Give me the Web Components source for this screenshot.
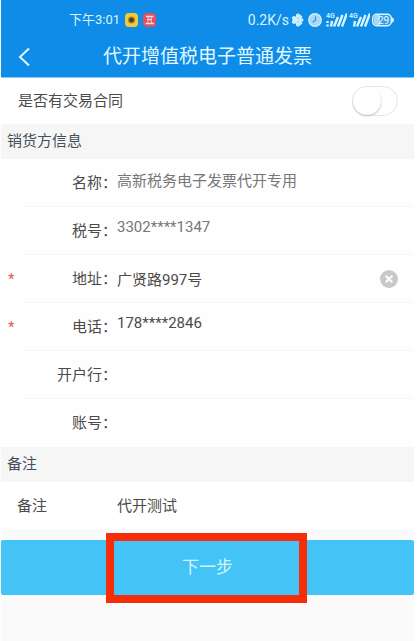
<!DOCTYPE html>
<html lang="zh-CN">
<head>
<meta charset="utf-8">
<meta name="viewport" content="width=device-width, initial-scale=1">
<title>代开增值税电子普通发票</title>
<style>
body { margin: 0; background: #fff; font-family: Roboto, "Noto Sans CJK SC", sans-serif; font-size: 15px; color: #4b4b4b; }
</style>
</head>
<body>
<invoice-app></invoice-app>
<script>
function define(name, html, setup) {
  customElements.define(name, class extends HTMLElement {
    connectedCallback() {
      if (this.shadowRoot) return;
      const root = this.attachShadow({ mode: 'open' });
      const t = document.createElement('template');
      t.innerHTML = html;
      root.append(t.content.cloneNode(true));
      if (setup) setup(this, root);
    }
  });
}

define('status-bar', `
<style>
:host { display: flex; align-items: center; justify-content: space-between; height: 40px; padding: 0 20px 0 68px; color: #d9f4fc; font-size: 13px; line-height: 16px; }
div { display: flex; align-items: center; }
svg { display: block; flex: none; }
.left { gap: 5px; }
.right { gap: 2px; }
.speed { font-size: 14px; }
.clock { margin: 0 2px; }
</style>
<div class="left"><span>下午3:01</span>
<svg width="13" height="14" viewBox="0 0 13 14"><rect width="13" height="14" rx="4" fill="#f3c936"/><circle cx="6.5" cy="7" r="3.5" fill="#a7832d"/><circle cx="6.5" cy="7" r="2.3" fill="#49451f"/></svg>
<svg width="13" height="14" viewBox="0 0 13 14"><rect width="13" height="14" rx="4" fill="#df5261"/><path d="M3 3.500h7.500M4 6.500h5M2.500 10.500h8.500" stroke="#fbdde1" stroke-width="1.600"/><path d="M5 4v6M8.500 4v6" stroke="#f3b3bb" stroke-width="1"/></svg>
</div>
<div class="right"><span class="speed">0.2K/s</span>
<svg width="13" height="14" viewBox="0 0 13 14"><path d="M5 1.500Q6 0 8 .8L11.500 3.500 10.500 5.500H12q1 1.500 0 3H10.500L11.500 10.500 8 13.200Q6 14 5 12.500V10.500L2.500 11 .7 9.500 1.500 7 .7 4.500 2.500 3 5 3.500Z" fill="#ccefff"/><path d="M7 4.500v1.700M7 8v1.700" stroke="#75c4ef"/></svg>
<svg class="clock" width="14" height="14" viewBox="0 0 14 14"><circle cx="7" cy="7" r="6.300" fill="#a8d8f3" stroke="#d2f1fc" stroke-width="1.200"/><path d="M7.500 3.500v4L4.500 9" fill="none" stroke="#2e91d7" stroke-width="1.200"/></svg>
<svg width="21" height="14" viewBox="0 0 21 14"><text x="0" y="5" font-size="7" font-weight="700" fill="#c8edfc">4G</text><path d="M1.500 8v2M1.500 11.500v2M6 8l-1 5.500M12 4l-4 9.500M16.500 2l-4.500 11.500M21 .5l-5 13" stroke="#d9f6ff" stroke-width="2.400"/></svg>
<svg width="21" height="14" viewBox="0 0 21 14"><text x="0" y="5" font-size="7" font-weight="700" fill="#c8edfc">4G</text><path d="M6 8l-1 5.500M12 4l-4 9.500M16.500 2l-4.500 11.500M21 .5l-5 13" stroke="#d9f6ff" stroke-width="2.400"/></svg>
<svg width="22" height="14" viewBox="0 0 22 14"><rect x=".7" y="1.200" width="18.600" height="11.600" rx="4" fill="#329de7" stroke="#d9f6ff" stroke-width="1.400"/><path d="M4.500 2H8v10H4.500Q2 12 2 9V5q0-3 2.500-3Z" fill="#a9daf5"/><path d="M20 4.500q2 0 2 2.500t-2 2.500Z" fill="#d9f6ff"/><text x="6" y="10.800" font-size="10" fill="#e6faff">29</text></svg>
</div>`);

define('nav-bar', `
<style>
:host { display: grid; grid-template-columns: 48px 1fr 48px; align-items: center; height: 34px; padding-bottom: 3px; color: #e2f8ff; }
button { border: 0; background: none; padding: 0 0 0 17px; height: 34px; color: inherit; }
svg { display: block; }
h1 { margin: 0; font-size: 19px; line-height: 28px; font-weight: 400; text-align: center; white-space: nowrap; }
</style>
<button type="button" aria-label="返回"><svg width="13" height="20" viewBox="0 0 13 20"><path d="M11 1.500 2 10l9 8.500" fill="none" stroke="currentColor" stroke-width="2"/></svg></button>
<h1><slot></slot></h1>`);

define('section-title', `
<style>
:host { display: block; background: #f6f6f6; padding: 5px 6px 6px; line-height: 24px; color: #46505c; }
h2 { margin: 0; font: inherit; }
</style><h2><slot></slot></h2>`);

define('toggle-row', `
<style>
:host { display: flex; align-items: center; justify-content: space-between; height: 46px; padding: 0 16px 0 17px; background: #fff; }
label { padding-bottom: 4px; }
input { appearance: none; margin: 0; width: 46px; height: 30px; border: 1px solid #e5e7e7; border-radius: 15px; background: #fdfefe; }
input::before { content: ""; display: block; width: 28px; height: 28px; border-radius: 14px; background: #fff; box-shadow: 0 1px 2px #bbb; }
input:checked { background: #44c3f7; }
input:checked::before { margin-left: auto; }
</style>
<label for="toggle"><slot></slot></label><input id="toggle" type="checkbox" role="switch">`);

define('form-row', `
<style>
:host { display: grid; grid-template-columns: 24px 92px 1fr auto; align-items: center; height: 48px; background: linear-gradient(#f5f5f7, #f5f5f7) 24px 100% / 100% 1px no-repeat #fefefe; }
:host([last]) { background: #fefefe; }
:host([plain]) { grid-template-columns: 16px 100px 1fr auto; height: 47px; background: #fff; }
.mark { padding: 0 0 0 7px; color: #e75550; line-height: 24px; }
label { text-align: right; line-height: 24px; white-space: nowrap; }
:host([plain]) label { text-align: left; }
input { min-width: 0; width: 100%; height: 24px; margin: 0 0 2px; padding: 0; border: 0; outline: 0; background: none; font: inherit; color: #4b4b4b; }
input:read-only { color: #777; }
:host([raised]) input { margin-bottom: 8px; }
button { margin: 0 16px 0 0; padding: 0; border: 0; background: none; }
svg { display: block; }
[hidden] { display: none; }
</style>
<span class="mark" aria-hidden="true"></span><label for="field"></label><input id="field" type="text">
<button type="button" aria-label="清除" hidden><svg width="18" height="18" viewBox="0 0 18 18"><circle cx="9" cy="9" r="9" fill="#c9c9c9"/><path d="m5.700 5.700 6.600 6.600m0-6.600-6.600 6.600" stroke="#fff" stroke-width="2"/></svg></button>`,
(el, root) => {
  const input = root.querySelector('input');
  const button = root.querySelector('button');
  root.querySelector('label').textContent = el.getAttribute('label');
  input.value = el.getAttribute('value') || '';
  input.readOnly = el.hasAttribute('locked');
  if (el.hasAttribute('required')) { root.querySelector('.mark').textContent = '*'; input.required = true; }
  button.hidden = !el.hasAttribute('clearable');
  button.addEventListener('click', () => { input.value = ''; input.focus(); });
});

define('submit-bar', `
<style>
:host { display: grid; grid-template-columns: 105px 1fr 107px; padding-top: 11px; }
button { grid-area: 1 / 1 / 2 / 4; height: 55px; border: 0; border-radius: 2px; padding: 0 0 5px; background: #44c3f7; color: #d6f4fd; font: inherit; font-size: 17px; }
.focus { grid-area: 1 / 2 / 2 / 3; margin: -7px 0 -8px; border: 8px solid #f52d08; pointer-events: none; }
</style>
<button type="button"><slot></slot></button><div class="focus"></div>`);

define('invoice-app', `
<style>
:host { display: block; padding: 0 4px 0 1px; }
main { min-height: 100vh; background: #fafafa; }
header { background: #0e8ce8; border-bottom: 1px solid #8bc7f0; }
</style>
<main>
<header><status-bar></status-bar><nav-bar>代开增值税电子普通发票</nav-bar></header>
<toggle-row>是否有交易合同</toggle-row>
<section-title>销货方信息</section-title>
<form-row label="名称：" value="高新税务电子发票代开专用" locked raised></form-row>
<form-row label="税号：" value="3302****1347" locked raised></form-row>
<form-row label="地址：" value="广贤路997号" required clearable></form-row>
<form-row label="电话：" value="178****2846" required raised></form-row>
<form-row label="开户行："></form-row>
<form-row label="账号：" last></form-row>
<section-title>备注</section-title>
<form-row label="备注" value="代开测试" plain></form-row>
<submit-bar>下一步</submit-bar>
</main>`);
</script>
</body>
</html>
